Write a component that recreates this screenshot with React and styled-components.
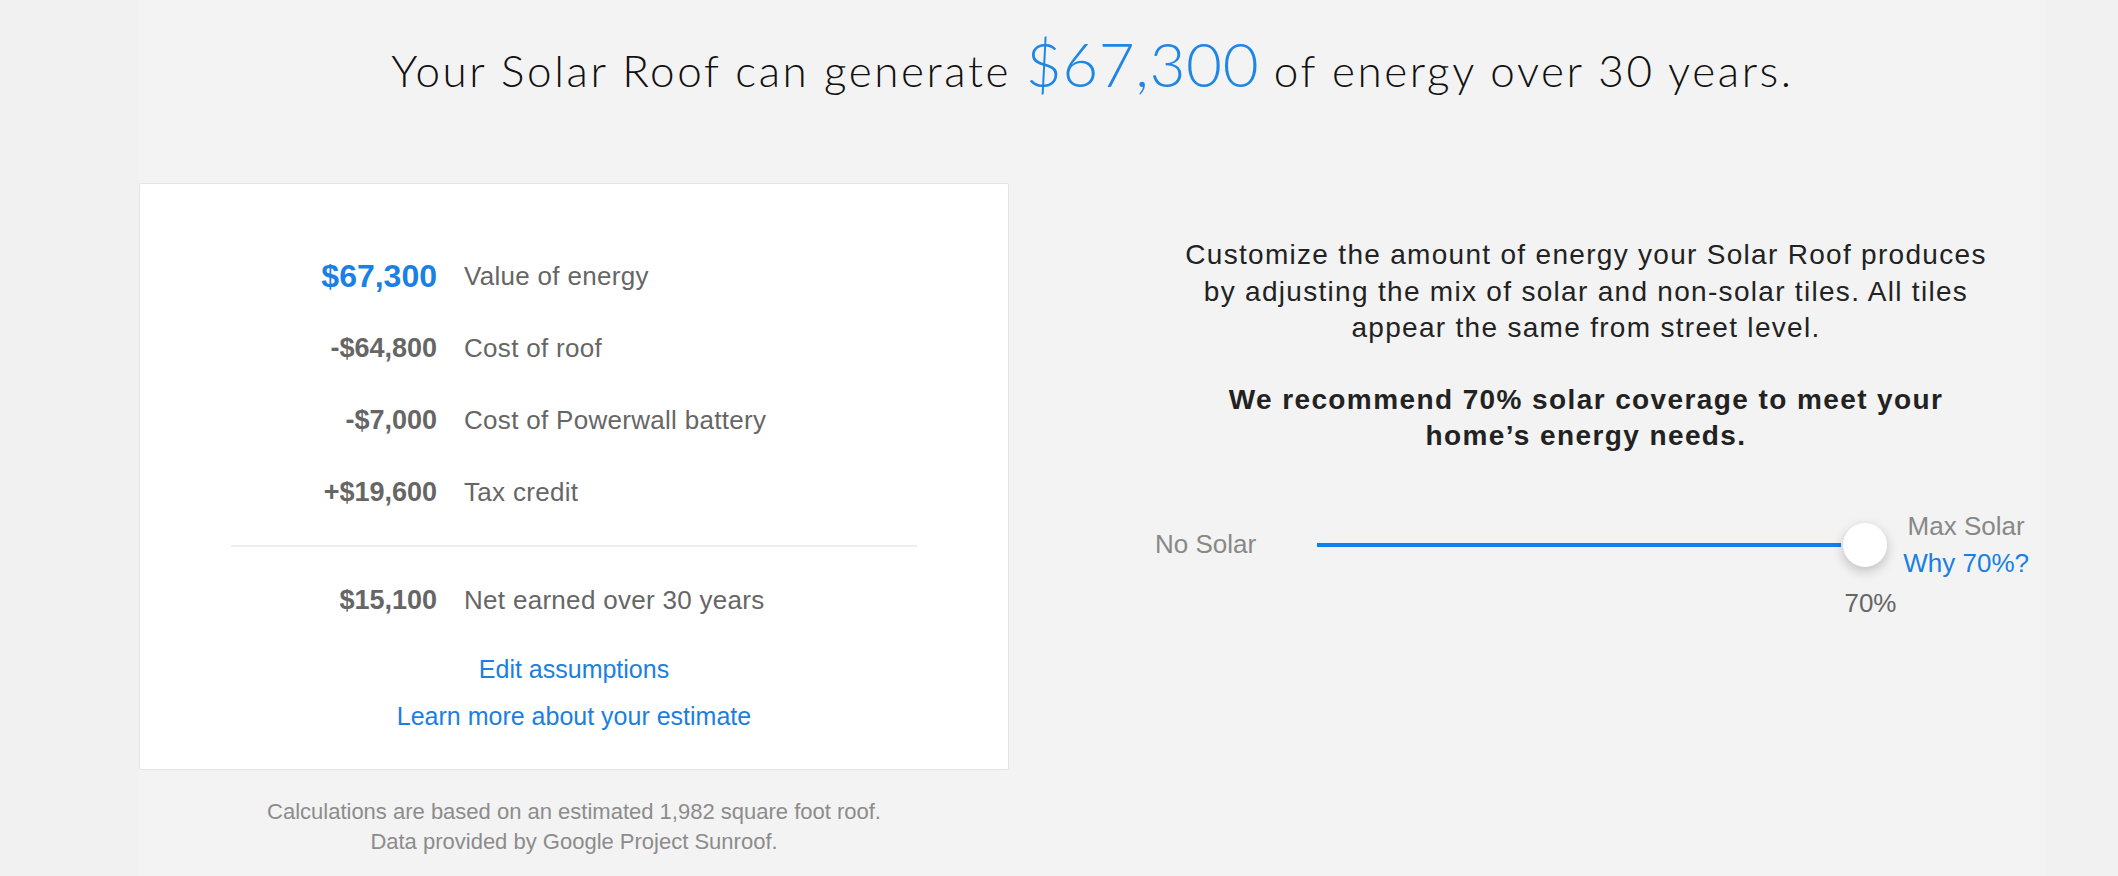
import React from 'react';
import styled, { createGlobalStyle } from 'styled-components';

const GlobalStyle = createGlobalStyle`
  body {
    margin: 0;
    background: #f1f1f1;
    font-family: "Liberation Sans", Arial, sans-serif;
  }
`;

// Page shell
const Page = styled.div`
  width: 1907px;
  margin-left: 139px;
  min-height: 876px;
  background: #f3f3f3;
`;

const Headline = styled.h1`
  margin: 0;
  padding: 25px 0 0 0;
  height: 183px;
  box-sizing: border-box;
  text-align: center;
  font-family: Lato, "Open Sans", sans-serif;
  font-weight: 300;
  font-size: 44px;
  line-height: 76px;
  letter-spacing: 2.6px;
  color: #111;
`;

const BigValue = styled.span`
  font-size: 62px;
  letter-spacing: 0.6px;
  color: #1f86e6;
  font-weight: 300;
`;

const Columns = styled.div`
  display: grid;
  grid-template-columns: 870px 920px;
  column-gap: 117px;
  align-items: start;
`;

// Left: estimate card
const LeftCol = styled.div`
  display: flex;
  flex-direction: column;
`;

const Card = styled.div`
  background: #fff;
  border: 1px solid #e4e4e4;
  border-radius: 2px;
  padding: 56px 91px 35px;
  display: flex;
  flex-direction: column;
`;

const Row = styled.div`
  display: grid;
  grid-template-columns: 206px 1fr;
  column-gap: 27px;
  align-items: center;
  height: 72px;
`;

const Amount = styled.span`
  text-align: right;
  font-weight: bold;
  font-size: ${p => (p.$big ? '32px' : '27px')};
  color: ${p => (p.$big ? '#1a80e5' : '#666')};
`;

const Label = styled.span`
  font-size: 26px;
  letter-spacing: 0.3px;
  color: #666;
`;

const Divider = styled.hr`
  border: none;
  border-top: 2px solid #eeeeee;
  margin: 17px 0 17px;
`;

const Links = styled.div`
  display: flex;
  flex-direction: column;
  align-items: center;
  gap: 11px;
  margin-top: 15px;
`;

const Link = styled.a`
  font-size: 25px;
  line-height: 36px;
  color: #1a7fe0;
  text-decoration: none;
  cursor: pointer;
`;

const Footnote = styled.p`
  margin: 27px 0 0;
  text-align: center;
  font-size: 22px;
  line-height: 30px;
  color: #8c8c8c;
`;

// Right: customize panel
const RightCol = styled.div`
  padding-top: 54px;
  display: flex;
  flex-direction: column;
  align-items: center;
`;

const Text = styled.p`
  margin: 0;
  text-align: center;
  font-size: 28px;
  line-height: 36.5px;
  letter-spacing: ${p => (p.$bold ? '1.4px' : '1.3px')};
  color: #222;
  font-weight: ${p => (p.$bold ? 'bold' : 'normal')};
  margin-top: ${p => p.$gap || 0}px;
`;

const SliderRow = styled.div`
  margin-top: 68px;
  display: flex;
  align-items: center;
  height: 44px;
  width: 874px;
  padding-left: 12px;
`;

const SideLabel = styled.span`
  font-size: 26px;
  color: #888;
`;

const Track = styled.div`
  flex: 1;
  height: 4px;
  margin-left: 61px;
  margin-right: 4px;
  background: #1080ee;
`;

const Thumb = styled.div`
  position: relative;
  width: 44px;
  height: 44px;
  margin-left: -2px;
  border-radius: 50%;
  background: #fff;
  box-shadow: 0 4px 12px rgba(0, 0, 0, 0.22);
`;

const ThumbValue = styled.span`
  position: absolute;
  top: 65px;
  left: 50%;
  transform: translateX(-40%);
  font-size: 26px;
  color: #666;
`;

const MaxBox = styled.div`
  display: flex;
  flex-direction: column;
  align-items: center;
  margin-left: 16px;
  line-height: 37px;
`;

const WhyLink = styled.a`
  font-size: 26px;
  color: #1a7fe0;
  cursor: pointer;
`;

const rows = [
  { amount: '$67,300', label: 'Value of energy', big: true },
  { amount: '-$64,800', label: 'Cost of roof' },
  { amount: '-$7,000', label: 'Cost of Powerwall battery' },
  { amount: '+$19,600', label: 'Tax credit' },
];

export default function App() {
  return (
    <Page>
      <GlobalStyle />
      <Headline>
        Your Solar Roof can generate <BigValue>$67,300</BigValue> of energy over 30 years.
      </Headline>
      <Columns>
        <LeftCol>
          <Card>
            {rows.map(r => (
              <Row key={r.label}>
                <Amount $big={r.big}>{r.amount}</Amount>
                <Label>{r.label}</Label>
              </Row>
            ))}
            <Divider />
            <Row>
              <Amount>$15,100</Amount>
              <Label>Net earned over 30 years</Label>
            </Row>
            <Links>
              <Link>Edit assumptions</Link>
              <Link>Learn more about your estimate</Link>
            </Links>
          </Card>
          <Footnote>
            Calculations are based on an estimated 1,982 square foot roof.
            <br />
            Data provided by Google Project Sunroof.
          </Footnote>
        </LeftCol>
        <RightCol>
          <Text>
            Customize the amount of energy your Solar Roof produces
            <br />
            by adjusting the mix of solar and non-solar tiles. All tiles
            <br />
            appear the same from street level.
          </Text>
          <Text $bold $gap={35}>
            We recommend 70% solar coverage to meet your
            <br />
            home’s energy needs.
          </Text>
          <SliderRow>
            <SideLabel>No Solar</SideLabel>
            <Track />
            <Thumb>
              <ThumbValue>70%</ThumbValue>
            </Thumb>
            <MaxBox>
              <SideLabel>Max Solar</SideLabel>
              <WhyLink>Why 70%?</WhyLink>
            </MaxBox>
          </SliderRow>
        </RightCol>
      </Columns>
    </Page>
  );
}
